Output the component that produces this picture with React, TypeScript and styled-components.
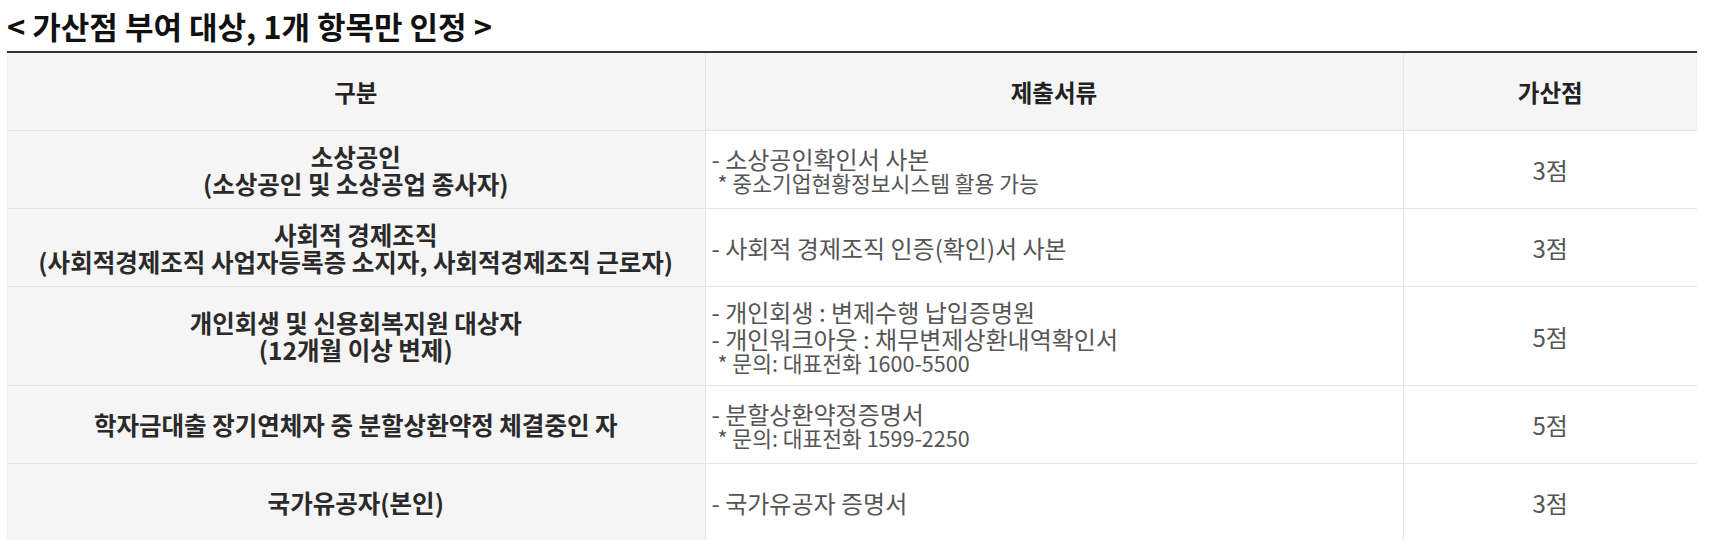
import React from "react";
import styled, { createGlobalStyle } from "styled-components";

type Row = {
  target: string[];
  docs: string[];
  notes: string[];
  score: string;
};

const rows: Row[] = [
  {
    target: ["소상공인", "(소상공인 및 소상공업 종사자)"],
    docs: ["- 소상공인확인서 사본"],
    notes: ["* 중소기업현황정보시스템 활용 가능"],
    score: "3점",
  },
  {
    target: ["사회적 경제조직", "(사회적경제조직 사업자등록증 소지자, 사회적경제조직 근로자)"],
    docs: ["- 사회적 경제조직 인증(확인)서 사본"],
    notes: [],
    score: "3점",
  },
  {
    target: ["개인회생 및 신용회복지원 대상자", "(12개월 이상 변제)"],
    docs: ["- 개인회생 : 변제수행 납입증명원", "- 개인워크아웃 : 채무변제상환내역확인서"],
    notes: ["* 문의: 대표전화 1600-5500"],
    score: "5점",
  },
  {
    target: ["학자금대출 장기연체자 중 분할상환약정 체결중인 자"],
    docs: ["- 분할상환약정증명서"],
    notes: ["* 문의: 대표전화 1599-2250"],
    score: "5점",
  },
  {
    target: ["국가유공자(본인)"],
    docs: ["- 국가유공자 증명서"],
    notes: [],
    score: "3점",
  },
];

const GlobalStyle = createGlobalStyle`
  body {
    margin: 0;
    background: #fff;
    font-family: "Noto Sans CJK KR", "Noto Sans", sans-serif;
  }
`;

const Wrapper = styled.div`
  padding: 8px 0 0 7px;
`;

const Title = styled.h3`
  margin: 0 0 7px;
  font-size: 31px;
  line-height: 36px;
  font-weight: 700;
  color: #111;
`;

const Table = styled.table`
  width: 1690px;
  table-layout: fixed;
  border-collapse: collapse;
  border-top: 2px solid #333;
`;

const HeadCell = styled.th`
  height: 77px;
  padding: 0;
  background: #f5f5f5;
  color: #222;
  font-size: 23.5px;
  font-weight: 700;
  text-align: center;
  vertical-align: middle;
  border-bottom: 1px solid #e4e4e4;
  border-left: 1px solid #e4e4e4;
  &:first-child {
    border-left: none;
  }
`;

const BodyRow = styled.tr`
  height: 78px;
`;

const Cell = styled.td<{ $kind: "target" | "docs" | "score" }>`
  padding: 11px 6px;
  font-size: ${({ $kind }) => ($kind === "target" ? "24.5px" : "24px")};
  line-height: 27px;
  vertical-align: middle;
  border-bottom: 1px solid #e4e4e4;
  border-left: ${({ $kind }) => ($kind === "target" ? "none" : "1px solid #e4e4e4")};
  background: ${({ $kind }) => ($kind === "target" ? "#f5f5f5" : "#fff")};
  color: ${({ $kind }) => ($kind === "target" ? "#2a2a2a" : "#555")};
  font-weight: ${({ $kind }) => ($kind === "target" ? 700 : 400)};
  text-align: ${({ $kind }) => ($kind === "docs" ? "left" : "center")};
`;

const Line = styled.div`
  white-space: nowrap;
`;

const Note = styled.div`
  padding-left: 6px;
  font-size: 21.5px;
  line-height: 22px;
  white-space: nowrap;
`;

export default function App() {
  return (
    <Wrapper>
      <GlobalStyle />
      <Title>&lt; 가산점 부여 대상, 1개 항목만 인정 &gt;</Title>
      <Table>
        <colgroup>
          <col style={{ width: 698 }} />
          <col style={{ width: 698 }} />
          <col style={{ width: 294 }} />
        </colgroup>
        <thead>
          <tr>
            <HeadCell>구분</HeadCell>
            <HeadCell>제출서류</HeadCell>
            <HeadCell>가산점</HeadCell>
          </tr>
        </thead>
        <tbody>
          {rows.map((row, i) => (
            <BodyRow key={i}>
              <Cell $kind="target">
                {row.target.map((t, j) => (
                  <Line key={j}>{t}</Line>
                ))}
              </Cell>
              <Cell $kind="docs">
                {row.docs.map((d, j) => (
                  <Line key={j}>{d}</Line>
                ))}
                {row.notes.map((n, j) => (
                  <Note key={j}>{n}</Note>
                ))}
              </Cell>
              <Cell $kind="score">{row.score}</Cell>
            </BodyRow>
          ))}
        </tbody>
      </Table>
    </Wrapper>
  );
}
